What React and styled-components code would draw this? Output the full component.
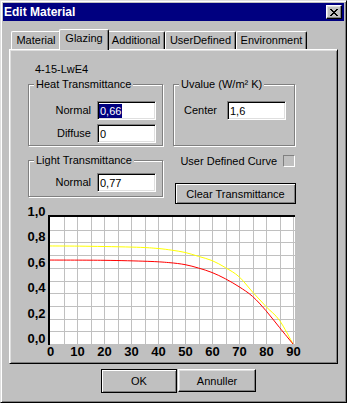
import React from 'react';
import styled, { createGlobalStyle, css } from 'styled-components';

const GlobalStyle = createGlobalStyle`
  html, body {
    margin: 0;
    padding: 0;
    background: #c0c0c0;
  }
  body {
    font-family: 'Liberation Sans', Arial, sans-serif;
    font-size: 11px;
    color: #000;
  }
  *, *::before, *::after {
    box-sizing: border-box;
  }
`;

const Window = styled.div`
  width: 347px;
  height: 403px;
  display: flex;
  flex-direction: column;
  background: #c0c0c0;
  border: 1px solid;
  border-color: #dfdfdf #000 #000 #dfdfdf;
  box-shadow: inset 1px 1px #fff, inset -1px -1px #808080;
  padding: 2px;
`;

const TitleBar = styled.div`
  flex: none;
  height: 18px;
  display: flex;
  align-items: center;
  justify-content: space-between;
  padding: 0 2px 0 1px;
  background: #000080;
  color: #fff;
`;

const Title = styled.span`
  font-weight: bold;
  font-size: 12px;
  line-height: 14px;
`;

const CloseButton = styled.div`
  width: 16px;
  height: 14px;
  display: flex;
  align-items: center;
  justify-content: center;
  background: #c0c0c0;
  border: 1px solid;
  border-color: #fff #000 #000 #fff;
  box-shadow: inset -1px -1px #808080, inset 1px 1px #dfdfdf;
`;

const Body = styled.div`
  flex: 1;
  display: flex;
  flex-direction: column;
  padding: 8px 6px 0;
`;

const TabStrip = styled.div`
  position: relative;
  z-index: 1;
  display: flex;
  align-items: flex-end;
  padding-left: 2px;
`;

const Tab = styled.div`
  position: relative;
  flex: none;
  width: ${p => p.$w}px;
  height: 18px;
  padding-top: 2px;
  text-align: center;
  line-height: 13px;
  white-space: nowrap;
  background: #c0c0c0;
  border-top: 1px solid #fff;
  border-left: 1px solid #fff;
  border-right: 1px solid #000;
  border-radius: 2px 2px 0 0;
  box-shadow: inset -1px 0 #808080;

  ${p => p.$active && css`
    z-index: 2;
    width: ${p.$w + 4}px;
    height: 21px;
    margin: 0 -2px -1px;
  `}
`;

const Panel = styled.div`
  flex: none;
  height: 315px;
  display: flex;
  flex-direction: column;
  border: 1px solid;
  border-color: #fff #000 #000 #fff;
  box-shadow: inset 1px 1px #dfdfdf, inset -1px -1px #808080;
`;

const Top = styled.div`
  padding: 13px 0 0 18px;
`;

const Name = styled.div`
  margin-left: 7px;
  line-height: 13px;
`;

const Grid = styled.div`
  display: grid;
  grid-template-columns: 135px 122px;
  column-gap: 10px;
  row-gap: 8px;
  margin-top: 2px;
`;

const Group = styled.fieldset`
  margin: 0;
  min-width: 0;
  padding: ${p => p.$pad};
  border: 1px solid #808080;
  box-shadow: inset 1px 1px #fff, 1px 1px #fff;
  display: flex;
  flex-direction: column;
  gap: 4px;
  align-self: ${p => (p.$top ? 'start' : 'stretch')};
`;

const Legend = styled.legend`
  padding: 0 2px;
  line-height: 13px;
  background: #c0c0c0;
`;

const Row = styled.div`
  display: flex;
  align-items: center;
  justify-content: flex-end;
  gap: ${p => p.$gap || 6}px;
`;

const Label = styled.span`
  line-height: 13px;
`;

const Field = styled.div`
  flex: none;
  width: 59px;
  height: 19px;
  display: flex;
  align-items: center;
  padding-left: 1px;
  background: #fff;
  border: 1px solid;
  border-color: #808080 #fff #fff #808080;
  box-shadow: inset 1px 1px #000, inset -1px -1px #dfdfdf;
`;

const Value = styled.span`
  display: inline-block;
  padding: 0 1px;
  line-height: 14px;
  ${p => p.$selected && css`
    background: #000080;
    color: #fff;
  `}
`;

const Stack = styled.div`
  display: flex;
  flex-direction: column;
`;

const CheckRow = styled.div`
  height: 14px;
  display: flex;
  align-items: center;
  justify-content: flex-end;
  gap: 6px;
`;

const CheckBox = styled.span`
  width: 12px;
  height: 12px;
  background: #c0c0c0;
  border: 1px solid;
  border-color: #808080 #fff #fff #808080;
`;

const Button = styled.div`
  width: ${p => p.$w}px;
  height: ${p => p.$h}px;
  display: flex;
  align-items: center;
  justify-content: center;
  background: #c0c0c0;
  border: 1px solid;
  border-color: #fff #000 #000 #fff;
  box-shadow: inset -1px -1px #808080, inset 1px 1px #dfdfdf;

  ${p => p.$default && css`
    border-color: #000;
    box-shadow: inset 1px 1px #fff, inset -1px -1px #808080;
  `}
`;

const ClearButton = styled(Button)`
  margin: 15px 0 0 2px;
`;

const ChartBox = styled.div`
  margin: 1px 0 0 10px;
  line-height: 0;
`;

const ButtonRow = styled.div`
  display: flex;
  gap: 1px;
  padding: 5px 0 0 92px;
`;

const AxisText = styled.text`
  font-family: 'Liberation Sans', Arial, sans-serif;
  font-weight: bold;
  font-size: 13px;
`;

const X0 = 50;
const X1 = 293;
const YB = 344;
const YT = 217;
const px = d => X0 + (d / 90) * (X1 - X0);
const py = v => YB - v * (YB - YT);

// angle (deg) -> transmittance, read off the plotted curves
const heat = [
  [0, 0.661], [20, 0.659], [36, 0.651], [44, 0.641], [50, 0.625],
  [55, 0.598], [60, 0.563], [65, 0.513], [70, 0.451], [75, 0.375],
  [80, 0.262], [85, 0.13], [90, 0],
];

const light = [
  [0, 0.772], [13, 0.77], [32, 0.762], [40, 0.752], [45, 0.739], [50, 0.721],
  [55, 0.69], [60, 0.657], [65, 0.601], [70, 0.53], [75, 0.41],
  [80, 0.295], [85, 0.186], [90, 0],
];

const f = n => n.toFixed(2);

function curve(data) {
  const p = data.map(([d, v]) => [px(d), py(v)]);
  let s = `M${f(p[0][0])} ${f(p[0][1])}`;
  for (let i = 0; i < p.length - 1; i++) {
    const a = p[i - 1] || p[i];
    const b = p[i];
    const c = p[i + 1];
    const d = p[i + 2] || c;
    const c1x = b[0] + (c[0] - a[0]) / 6;
    const c1y = b[1] + (c[1] - a[1]) / 6;
    const c2x = c[0] - (d[0] - b[0]) / 6;
    const c2y = c[1] - (d[1] - b[1]) / 6;
    s += ` C${f(c1x)} ${f(c1y)} ${f(c2x)} ${f(c2y)} ${f(c[0])} ${f(c[1])}`;
  }
  return s;
}

const Chart = () => {
  const cols = Array.from({ length: 19 }, (_, k) => Math.round(px(k * 5)));
  const rows = Array.from({ length: 11 }, (_, j) => Math.round(py(j / 10)));
  return (
    <svg width="300" height="155" viewBox="20 205 300 155">
      <rect x="48" y="215" width="247" height="130" fill="#fff" />
      <g stroke="#c0c0c0" strokeWidth="1" shapeRendering="crispEdges">
        {cols.slice(1).map(x => (
          <line key={`c${x}`} x1={x + 0.5} y1="217" x2={x + 0.5} y2="345" />
        ))}
        {rows.slice(0, 10).map(y => (
          <line key={`r${y}`} x1="50" y1={y + 0.5} x2="295" y2={y + 0.5} />
        ))}
      </g>
      <rect x="48" y="215" width="2" height="130" fill="#000" />
      <rect x="48" y="215" width="247" height="2" fill="#000" />
      <path d={curve(light)} fill="none" stroke="#ffff00" strokeWidth="1" />
      <path d={curve(heat)} fill="none" stroke="#ff0000" strokeWidth="1" />
      {[0, 0.2, 0.4, 0.6, 0.8, 1].map(v => (
        <AxisText key={v} x="45.5" y={rows[Math.round(v * 10)] - 1} textAnchor="end">
          {v.toFixed(1).replace('.', ',')}
        </AxisText>
      ))}
      {[0, 10, 20, 30, 40, 50, 60, 70, 80, 90].map(d => (
        <AxisText key={d} x={px(d) + 0.5} y="356" textAnchor="middle">
          {d}
        </AxisText>
      ))}
    </svg>
  );
};

const CloseGlyph = () => (
  <svg width="8" height="7" viewBox="0 0 8 7" shapeRendering="crispEdges">
    <path
      fill="#000"
      d="M0 0h2v1H0zM6 0h2v1H6zM1 1h2v1H1zM5 1h2v1H5zM2 2h4v1H2zM3 3h2v1H3zM2 4h4v1H2zM1 5h2v1H1zM5 5h2v1H5zM0 6h2v1H0zM6 6h2v1H6z"
    />
  </svg>
);

const tabs = [
  { label: 'Material', w: 50 },
  { label: 'Glazing', w: 46, active: true },
  { label: 'Additional', w: 58 },
  { label: 'UserDefined', w: 71 },
  { label: 'Environment', w: 71 },
];

const App = () => (
  <>
    <GlobalStyle />
    <Window>
      <TitleBar>
        <Title>Edit Material</Title>
        <CloseButton>
          <CloseGlyph />
        </CloseButton>
      </TitleBar>
      <Body>
        <TabStrip>
          {tabs.map(t => (
            <Tab key={t.label} $w={t.w} $active={t.active}>
              {t.label}
            </Tab>
          ))}
        </TabStrip>
        <Panel>
          <Top>
            <Name>4-15-LwE4</Name>
            <Grid>
              <Group $pad="10px 6px 2px 5px">
                <Legend>Heat Transmittance</Legend>
                <Row>
                  <Label>Normal</Label>
                  <Field><Value $selected>0,66</Value></Field>
                </Row>
                <Row>
                  <Label>Diffuse</Label>
                  <Field><Value>0</Value></Field>
                </Row>
              </Group>
              <Group $pad="10px 8px 2px 5px">
                <Legend>Uvalue (W/m² K)</Legend>
                <Row $gap={10}>
                  <Label>Center</Label>
                  <Field><Value>1,6</Value></Field>
                </Row>
              </Group>
              <Group $pad="6px 6px 4px 5px" $top>
                <Legend>Light Transmittance</Legend>
                <Row>
                  <Label>Normal</Label>
                  <Field><Value>0,77</Value></Field>
                </Row>
              </Group>
              <Stack>
                <CheckRow>
                  <Label>User Defined Curve</Label>
                  <CheckBox />
                </CheckRow>
                <ClearButton $w={121} $h={21} $default>
                  Clear Transmittance
                </ClearButton>
              </Stack>
            </Grid>
          </Top>
          <ChartBox>
            <Chart />
          </ChartBox>
        </Panel>
        <ButtonRow>
          <Button $w={76} $h={24} $default>OK</Button>
          <Button $w={78} $h={23}>Annuller</Button>
        </ButtonRow>
      </Body>
    </Window>
  </>
);

export default App;
